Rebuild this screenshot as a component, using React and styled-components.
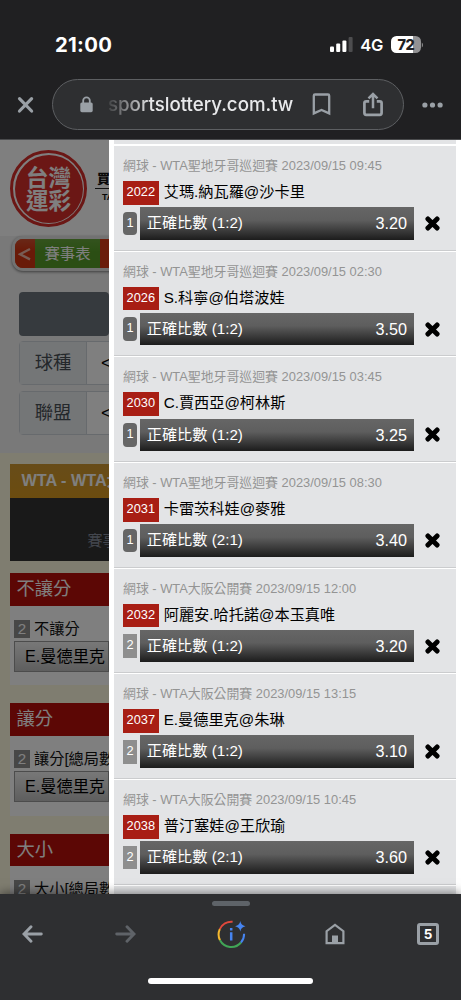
import React from 'react';
import styled, { createGlobalStyle } from 'styled-components';

const GlobalStyle = createGlobalStyle`
  * {
    box-sizing: border-box;
  }
  body {
    margin: 0;
    background: #202022;
    font-family: 'Liberation Sans', 'Noto Sans CJK TC', sans-serif;
  }
`;

const Screen = styled.div`
  width: 461px;
  height: 1000px;
  display: grid;
  grid-template-rows: 140px 754px 106px;
  overflow: hidden;
`;

/* browser chrome */

const TopChrome = styled.header`
  background: #202022;
  border-bottom: 1px solid #4a4b4d;
  font-family: Inter, sans-serif;
`;

const StatusBar = styled.div`
  height: 79px;
  padding: 10px 38px 0 55px;
  display: flex;
  align-items: center;
  justify-content: space-between;
`;

const Clock = styled.span`
  color: #fff;
  font-size: 20.3px;
  font-weight: 700;
  letter-spacing: 0.3px;
`;

const StatusIcons = styled.div`
  display: flex;
  align-items: center;
`;

const Network = styled.span`
  margin: 0 8px 0 7px;
  color: #fff;
  font-size: 16.5px;
  font-weight: 600;
  letter-spacing: -0.3px;
`;

const Battery = styled.span`
  width: 30px;
  height: 17px;
  border-radius: 5.5px;
  background: linear-gradient(90deg, #fff 72%, #929294 72%);
  color: #202022;
  font-size: 14.5px;
  font-weight: 800;
  line-height: 17px;
  text-align: center;
  letter-spacing: -0.4px;
`;

const AddressRow = styled.div`
  display: grid;
  grid-template-columns: 52px 352px 57px;
  align-items: center;
`;

const IconSlot = styled.div`
  display: flex;
  align-items: center;
  justify-content: center;
`;

const AddressBar = styled.div`
  height: 51px;
  padding: 0 20px 0 27px;
  display: flex;
  align-items: center;
  justify-content: space-between;
  border: 1px solid #5d5f62;
  border-radius: 26px;
  background: #2e2f31;
`;

const UrlGroup = styled.div`
  display: flex;
  align-items: center;
  gap: 15px;
`;

const Url = styled.span`
  width: 204px;
  color: #e8e9eb;
  font-size: 18.7px;
  font-weight: 500;
  line-height: 24px;
  white-space: nowrap;
  mask-image: linear-gradient(90deg, rgba(0, 0, 0, 0.1), #000 44px);
`;

const AddressActions = styled.div`
  display: flex;
  align-items: center;
  gap: 32px;
`;

const BottomChrome = styled.footer`
  position: relative;
  background: #2e2f31;
  box-shadow: 0 -1px 10px rgba(0, 0, 0, 0.5);
  display: flex;
  flex-direction: column;
  align-items: center;
`;

const Grabber = styled.div`
  width: 38px;
  height: 5px;
  margin-top: 7px;
  border-radius: 3px;
  background: #5e6368;
`;

const NavRow = styled.nav`
  width: 461px;
  height: 56px;
  display: grid;
  grid-template-columns: 65.4px 119.8px 92.6px 115px 70.4px;
  align-items: center;
  justify-items: center;
`;

const TabCount = styled.span`
  width: 22px;
  height: 22px;
  border: 3px solid #9aa0a6;
  border-radius: 3px;
  color: #fff;
  font-family: Inter, sans-serif;
  font-size: 13.5px;
  font-weight: 700;
  line-height: 16px;
  text-align: center;
`;

const HomeIndicator = styled.div`
  width: 165px;
  height: 6px;
  margin-top: 16px;
  border-radius: 3px;
  background: #fff;
`;

/* page behind the slip */

const Viewport = styled.main`
  display: grid;
  grid-template-columns: 109px 352px;
  overflow: hidden;
`;

const Page = styled.section`
  position: relative;
  height: 754px;
  overflow: hidden;
  background: #f3f3f3;
  white-space: nowrap;
`;

const Scrim = styled.div`
  position: absolute;
  inset: 0;
  background: rgba(0, 0, 0, 0.5);
`;

const SiteHeader = styled.div`
  height: 96px;
  padding: 10px 0 0 10px;
  display: flex;
  background: #fff;
`;

const Logo = styled.div`
  flex: none;
  width: 77px;
  height: 77px;
  border-radius: 50%;
  border: 3px solid #d72f2b;
  background: #fff;
  padding: 1.5px;
`;

const LogoFace = styled.div`
  height: 100%;
  padding-top: 2px;
  display: flex;
  flex-direction: column;
  justify-content: center;
  border-radius: 50%;
  background: #d72f2b;
  color: #fff;
  font-size: 22.5px;
  font-weight: 700;
  line-height: 23px;
  text-align: center;
`;

const Slogan = styled.div`
  margin: 20px 0 0 8px;
  color: #111;
  font-size: 13px;
  font-weight: 900;
  line-height: 17px;
`;

const SloganChinese = styled.div`
  padding-left: 2px;
`;

const SloganLatin = styled.div`
  width: 60px;
  margin-top: 1px;
  padding-left: 7px;
  border-top: 1px solid #222;
  font-size: 9px;
  font-weight: 700;
  line-height: 17px;
`;

const MenuBar = styled.div`
  width: 200px;
  height: 35px;
  margin-left: 12px;
  display: flex;
  overflow: hidden;
  border: 3px solid #e4e4e4;
  border-radius: 11px;
  background: #d63a16;
  box-shadow: 0 1px 3px rgba(0, 0, 0, 0.5);
`;

const MenuArrow = styled.span`
  width: 20px;
  padding-left: 3px;
  display: flex;
  align-items: center;
  background: linear-gradient(#d3502f, #d33411 40%);
`;

const MenuItem = styled.span`
  width: 65px;
  background: linear-gradient(#67a63c, #569d28 45%);
  color: #fff;
  font-size: 15.3px;
  line-height: 30px;
  text-align: center;
`;

const Filters = styled.div`
  height: 182px;
  padding: 21px 0 0 19px;
  display: flex;
  flex-direction: column;
  gap: 5.3px;
`;

const FilterBlock = styled.div`
  height: 44px;
  border-radius: 4px;
  background: #6c757d;
`;

const FilterRow = styled.div`
  width: 300px;
  height: 44px;
  display: flex;
  border: 1px solid #ced4da;
  border-radius: 4px;
  background: #fff;
  font-size: 18.3px;
  line-height: 41px;
`;

const FilterLabel = styled.span`
  width: 67px;
  margin-right: 14px;
  border-right: 1px solid #ced4da;
  background: #e9ecef;
  color: #495057;
  text-align: center;
`;

const Board = styled.div`
  padding: 11px 0 0 9.5px;
  background: #fffae0;
`;

const LeagueTitle = styled.h2`
  width: 240px;
  height: 34px;
  margin: 0;
  padding-left: 12px;
  background: linear-gradient(#cf9932, #d8981f);
  color: #fff;
  font-size: 16.2px;
  line-height: 33px;
`;

const MatchHead = styled.div`
  height: 63px;
  margin-bottom: 12px;
  padding: 32px 0 0 78px;
  background: #323232;
  color: #878d9c;
  font-size: 15px;
  line-height: 22px;
`;

const Market = styled.div`
  height: 112.4px;
  margin-bottom: 18px;
  background: #fff;
`;

const MarketTitle = styled.h3`
  height: 32.6px;
  margin: 0;
  padding-left: 7px;
  background: #b80f0b;
  color: #fff;
  font-size: 18.3px;
  font-weight: 400;
  line-height: 31px;
`;

const MarketLine = styled.div`
  height: 35px;
  padding: 14px 0 3px 4.5px;
  display: flex;
  gap: 4px;
  color: #111;
  font-size: 15.2px;
  line-height: 18px;
`;

const MarketNumber = styled.span`
  flex: none;
  width: 16px;
  background: #8e8e8e;
  color: #fff;
  text-align: center;
`;

const MarketOption = styled.div`
  height: 31px;
  margin-left: 4.5px;
  padding-left: 10px;
  border: 1px solid #999;
  background: linear-gradient(#f0f0f0, #bdbdbd);
  color: #000;
  font-size: 16.2px;
  line-height: 29px;
`;

/* bet slip */

const Slip = styled.aside`
  height: 754px;
  padding: 5px 5px 0;
  overflow: hidden;
  background: linear-gradient(#e3e4e6 4px, #fff 4px) 5px 0 / 342px 5px no-repeat #fff;
`;

const Bet = styled.article`
  height: 105.67px;
  padding: 10px 9px 0;
  border-top: 1px solid #fff;
  border-bottom: 1px solid #cbccce;
  background: #e3e4e6;
`;

const BetMeta = styled.div`
  height: 25px;
  color: #949494;
  font-size: 12.88px;
  line-height: 20px;
  white-space: nowrap;
`;

const BetMatch = styled.div`
  height: 26.2px;
  display: flex;
  gap: 5px;
  color: #000;
  font-size: 15.2px;
  line-height: 21px;
`;

const MatchCode = styled.span`
  width: 35.7px;
  height: 23.7px;
  background: #a81e14;
  color: #fff;
  font-size: 12.8px;
  line-height: 21.5px;
  text-align: center;
`;

const BetPick = styled.div`
  height: 32.6px;
  display: flex;
  align-items: center;
`;

const PassCount = styled.span`
  width: 14.3px;
  height: 23.6px;
  margin-right: 2.4px;
  border-radius: ${(p) => (p.$single ? '4px' : '0')};
  background: ${(p) => (p.$single ? '#666' : '#8e8e8e')};
  color: #fff;
  font-size: 12.8px;
  line-height: 22px;
  text-align: center;
`;

const Outcome = styled.div`
  width: 274.3px;
  height: 32.6px;
  margin-right: 11.5px;
  padding: 0 7px;
  display: flex;
  justify-content: space-between;
  background: linear-gradient(#666 0%, #5e5e5e 40%, #1c1c1c 100%);
  color: #fff;
  font-size: 15.2px;
  line-height: 31px;
`;

const Odds = styled.span`
  font-size: 16.2px;
  line-height: 33px;
`;

const markets = [
  { title: '不讓分', line: '不讓分' },
  { title: '讓分', line: '讓分[總局數' },
  { title: '大小', line: '大小[總局數' },
];

const bets = [
  { league: 'WTA聖地牙哥巡迴賽', time: '2023/09/15 09:45', code: '2022', match: '艾瑪.納瓦羅@沙卡里', pass: 1, score: '1:2', odds: '3.20' },
  { league: 'WTA聖地牙哥巡迴賽', time: '2023/09/15 02:30', code: '2026', match: 'S.科寧@伯塔波娃', pass: 1, score: '1:2', odds: '3.50' },
  { league: 'WTA聖地牙哥巡迴賽', time: '2023/09/15 03:45', code: '2030', match: 'C.賈西亞@柯林斯', pass: 1, score: '1:2', odds: '3.25' },
  { league: 'WTA聖地牙哥巡迴賽', time: '2023/09/15 08:30', code: '2031', match: '卡雷茨科娃@麥雅', pass: 1, score: '2:1', odds: '3.40' },
  { league: 'WTA大阪公開賽', time: '2023/09/15 12:00', code: '2032', match: '阿麗安.哈托諾@本玉真唯', pass: 2, score: '1:2', odds: '3.20' },
  { league: 'WTA大阪公開賽', time: '2023/09/15 13:15', code: '2037', match: 'E.曼德里克@朱琳', pass: 2, score: '1:2', odds: '3.10' },
  { league: 'WTA大阪公開賽', time: '2023/09/15 10:45', code: '2038', match: '普汀塞娃@王欣瑜', pass: 2, score: '2:1', odds: '3.60' },
];

function SignalIcon() {
  return (
    <svg width="23" height="15" viewBox="0 0 23 15">
      <rect x="0" y="9.5" width="4" height="5.5" rx="1" fill="#fff" />
      <rect x="6.2" y="6.5" width="4" height="8.5" rx="1" fill="#fff" />
      <rect x="12.4" y="3.5" width="4" height="11.5" rx="1" fill="#fff" />
      <rect x="18.6" y="0" width="4" height="15" rx="1" fill="#4d4d4f" />
    </svg>
  );
}

function TopBar() {
  return (
    <TopChrome>
      <StatusBar>
        <Clock>21:00</Clock>
        <StatusIcons>
          <SignalIcon />
          <Network>4G</Network>
          <Battery>72</Battery>
          <svg width="2" height="6" viewBox="0 0 2 6">
            <path d="M.8 .5Q2 1.4 2 3T.8 5.5Z" fill="#8a8a8c" />
          </svg>
        </StatusIcons>
      </StatusBar>
      <AddressRow>
        <IconSlot>
          <svg width="18" height="18" viewBox="0 0 18 18" fill="none" stroke="#9aa0a6" strokeWidth="3.2" strokeLinecap="round">
            <path d="M2.5 2.7 14.6 15M14.6 2.7 2.5 15" />
          </svg>
        </IconSlot>
        <AddressBar>
          <UrlGroup>
            <svg width="13" height="17" viewBox="0 0 13 17">
              <path d="M3.2 8V4.6a3.3 3.3 0 0 1 6.6 0V8" fill="none" stroke="#9aa0a6" strokeWidth="1.8" />
              <rect x="0.3" y="6.4" width="12.4" height="9.8" rx="1.6" fill="#9aa0a6" />
            </svg>
            <Url>sportslottery.com.tw</Url>
          </UrlGroup>
          <AddressActions>
            <svg width="19" height="23" viewBox="0 0 19 23" fill="none" stroke="#9aa0a6" strokeWidth="2.3">
              <path d="M1.8 20.4V2.7Q1.8 1.5 3 1.5H16Q17.2 1.5 17.2 2.7V20.4L9.5 17Z" />
            </svg>
            <svg width="20" height="25" viewBox="0 0 20 25" fill="none" stroke="#9aa0a6" strokeWidth="2.7">
              <path d="M6.2 9.3H3.2Q1.4 9.3 1.4 11.1V20.8Q1.4 22.8 3.2 22.8H16.8Q18.6 22.8 18.6 20.8V11.1Q18.6 9.3 16.8 9.3H13.8" />
              <path d="M10 16.3V3M5.5 6.4 10 2 14.5 6.4" strokeWidth="2.5" />
            </svg>
          </AddressActions>
        </AddressBar>
        <IconSlot>
          <svg width="21" height="6" viewBox="0 0 21 6" fill="#9aa0a6">
            <circle cx="2.9" cy="3" r="2.6" />
            <circle cx="10.5" cy="3" r="2.6" />
            <circle cx="18.1" cy="3" r="2.6" />
          </svg>
        </IconSlot>
      </AddressRow>
    </TopChrome>
  );
}

function SitePage() {
  return (
    <Page>
      <SiteHeader>
        <Logo>
          <LogoFace>
            <span>台灣</span>
            <span>運彩</span>
          </LogoFace>
        </Logo>
        <Slogan>
          <SloganChinese>買</SloganChinese>
          <SloganLatin>TA</SloganLatin>
        </Slogan>
      </SiteHeader>
      <MenuBar>
        <MenuArrow>
          <svg width="13" height="14" viewBox="0 0 13 14" fill="none" stroke="#efb8a8" strokeWidth="2.4">
            <path d="M12 2 2 7.2 12 12.4" />
          </svg>
        </MenuArrow>
        <MenuItem>賽事表</MenuItem>
      </MenuBar>
      <Filters>
        <FilterBlock />
        <FilterRow>
          <FilterLabel>球種</FilterLabel>&lt;
        </FilterRow>
        <FilterRow>
          <FilterLabel>聯盟</FilterLabel>&lt;
        </FilterRow>
      </Filters>
      <Board>
        <LeagueTitle>WTA - WTA大阪</LeagueTitle>
        <MatchHead>賽事</MatchHead>
        {markets.map((market) => (
          <Market key={market.title}>
            <MarketTitle>{market.title}</MarketTitle>
            <MarketLine>
              <MarketNumber>2</MarketNumber>
              <span>{market.line}</span>
            </MarketLine>
            <MarketOption>E.曼德里克</MarketOption>
          </Market>
        ))}
      </Board>
      <Scrim />
    </Page>
  );
}

function BetSlip() {
  return (
    <Slip>
      {bets.map((bet) => (
        <Bet key={bet.code}>
          <BetMeta>
            網球 - {bet.league} {bet.time}
          </BetMeta>
          <BetMatch>
            <MatchCode>{bet.code}</MatchCode>
            <span>{bet.match}</span>
          </BetMatch>
          <BetPick>
            <PassCount $single={bet.pass === 1}>{bet.pass}</PassCount>
            <Outcome>
              <span>正確比數 ({bet.score})</span>
              <Odds>{bet.odds}</Odds>
            </Outcome>
            <svg width="15" height="15" viewBox="0 0 15 15" fill="none" stroke="#000" strokeWidth="4.9" strokeLinecap="round">
              <path d="M2.9 2.9 12.1 12.1M12.1 2.9 2.9 12.1" />
            </svg>
          </BetPick>
        </Bet>
      ))}
      <Bet />
    </Slip>
  );
}

function BottomBar() {
  return (
    <BottomChrome>
      <Grabber />
      <NavRow>
        <svg width="21" height="18" viewBox="0 0 21 18" fill="none" stroke="#9aa0a6" strokeWidth="2.9" strokeLinecap="round">
          <path d="M9 1.7 2 9 9 16.3M2.2 9H19.3" />
        </svg>
        <svg width="21" height="18" viewBox="0 0 21 18" fill="none" stroke="#5f6368" strokeWidth="2.9" strokeLinecap="round">
          <path d="M12 1.7 19 9 12 16.3M18.8 9H1.7" />
        </svg>
        <svg width="29" height="29" viewBox="0 0 29 29" fill="none" strokeWidth="2">
          <path d="M2.8 9.2A12.8 12.8 0 0 1 15.6 1.8" stroke="#e0483c" />
          <path d="M3 20.3A12.8 12.8 0 0 1 2.8 9.2" stroke="#f5b82e" />
          <path d="M3 20.3A12.8 12.8 0 0 0 24 22.5" stroke="#41a556" />
          <path d="M24 22.5A12.8 12.8 0 0 0 27.1 13.8" stroke="#4684f0" />
          <path d="M23.3 1Q24 5.3 28.5 6.2 24 7.1 23.3 11.4 22.6 7.1 18.1 6.2 22.6 5.3 23.3 1Z" fill="#4684f0" />
          <path d="M14.2 8V10.4M14.2 12.2V20.5" stroke="#4684f0" strokeWidth="2.5" />
        </svg>
        <svg width="20" height="22" viewBox="0 0 20 22" fill="none" stroke="#9aa0a6" strokeWidth="2.2">
          <path d="M1.6 20.2V8.2L10 1.8 18.4 8.2V20.2Z" />
          <path d="M7 12.5H13V20.5H7Z" fill="#9aa0a6" stroke="none" />
        </svg>
        <TabCount>5</TabCount>
      </NavRow>
      <HomeIndicator />
    </BottomChrome>
  );
}

function App() {
  return (
    <>
      <GlobalStyle />
      <Screen>
        <TopBar />
        <Viewport>
          <SitePage />
          <BetSlip />
        </Viewport>
        <BottomBar />
      </Screen>
    </>
  );
}

export default App;
